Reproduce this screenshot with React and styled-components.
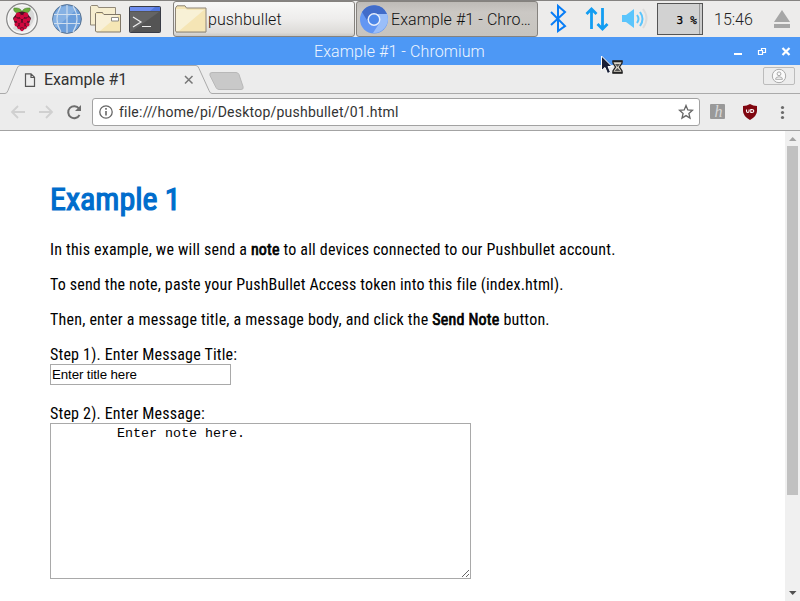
import React from 'react';
import styled, { createGlobalStyle } from 'styled-components';

const GlobalStyle = createGlobalStyle`
  * { box-sizing: border-box; }
  html, body { margin: 0; padding: 0; overflow: hidden; }
  svg { display: block; flex: none; }
`;

const Desktop = styled.div`
  position: relative;
  display: flex;
  flex-direction: column;
  width: 800px;
  height: 601px;
  overflow: hidden;
  background: #fff;
  font-family: Roboto, sans-serif;
`;

const Panel = styled.header`
  display: flex;
  align-items: flex-start;
  height: 37px;
  flex: none;
  background: #edeceb;
  border-top: 1px solid #858381;
`;

const Launchers = styled.nav`
  display: flex;
  width: 173px;
  flex: none;
  padding: 2px 0 0 5px;
  gap: 5px;
  > :first-child { margin-right: 6px; }
`;

const TaskButton = styled.div`
  display: flex;
  align-items: center;
  width: ${(p) => p.$width}px;
  height: 36px;
  flex: none;
  margin-right: 1px;
  padding-left: ${(p) => (p.$active ? 3 : 1)}px;
  border: 1px solid #85827e;
  border-radius: 3px;
  background: ${(p) => (p.$active ? 'linear-gradient(#bebbb7, #cbc8c4 30%, #c7c4bf)' : 'linear-gradient(#f8f8f7, #eeedec 50%, #dddbd8 90%, #c9c8c5)')};
  color: #111;
  font-weight: 300;
  font-size: 16px;
  white-space: nowrap;
`;

const TaskLabel = styled.span`
  margin-left: ${(p) => p.$gap}px;
  letter-spacing: 0.08px;
`;

const Tray = styled.div`
  display: flex;
  align-items: center;
  width: 262px;
  height: 36px;
`;

const CpuMeter = styled.div`
  width: 46px;
  height: 32px;
  flex: none;
  margin-left: 9px;
  padding-right: 5px;
  border: 1px solid #555;
  background: linear-gradient(90deg, transparent 41px, #999 41px, #999 42px, #ccc 42px) #d2d2d2;
  color: #000;
  font: 11px/34px "DejaVu Sans Mono", monospace;
  letter-spacing: 0.2px;
  text-align: right;
  white-space: pre;
  -webkit-text-stroke: 0.25px #000;
`;

const Clock = styled.time`
  width: 42px;
  margin: 1px 17px 0 11px;
  color: #222;
  font-weight: 300;
  font-size: 16px;
`;

const TitleBar = styled.div`
  display: flex;
  align-items: center;
  height: 28px;
  flex: none;
  background: #4d98f5;
  color: #eff6ff;
  font-weight: 300;
  font-size: 16px;
`;

const TitleText = styled.div`
  width: 175px;
  margin-left: 314px;
  letter-spacing: 0.09px;
  white-space: nowrap;
`;

const WindowControls = styled.div`
  margin-left: auto;
`;

const TabStrip = styled.div`
  height: 29px;
  flex: none;
  display: grid;
  background: #ececec;
  > * { grid-area: 1 / 1; }
`;

const TabContent = styled.div`
  display: flex;
  align-items: center;
  padding: 0 5px 0 24px;
  color: #333;
  font-size: 16px;
`;

const TabTitle = styled.span`
  width: 140px;
  margin-left: 8px;
  letter-spacing: -0.08px;
`;

const ProfileButton = styled.div`
  display: flex;
  align-self: flex-start;
  justify-content: center;
  width: 32px;
  height: 18px;
  margin: 2px 0 0 auto;
  border: 1px solid #bcbcbc;
  border-radius: 2px;
`;

const Toolbar = styled.div`
  display: flex;
  align-items: center;
  height: 37px;
  flex: none;
  padding-left: 10px;
  background: #ececec;
  border-bottom: 1px solid #a3a3a3;
`;

const AddressBar = styled.div`
  display: flex;
  align-items: center;
  width: 608px;
  height: 28px;
  margin-left: 9px;
  padding: 0 5px;
  border: 1px solid #a2a2a2;
  border-radius: 3px;
  background: #fff;
  color: #333;
  font-size: 14px;
`;

const Url = styled.span`
  flex: 1;
  margin-left: 5px;
  letter-spacing: 0.23px;
`;

const Viewport = styled.div`
  display: flex;
  flex: 1;
  min-height: 0;
`;

const Page = styled.main`
  flex: 1;
  padding: 48px 0 0 50px;
  color: #000;
  font-family: "Roboto Condensed", Roboto, sans-serif;
  font-stretch: condensed;
  font-size: 16px;
  line-height: 19px;
  letter-spacing: 0.19px;
`;

const Heading = styled.h1`
  margin: 0 0 21px;
  color: #006dcc;
  font-size: 32px;
  font-weight: 400;
  line-height: 40px;
  letter-spacing: 0;
  -webkit-text-stroke: 1.2px #006dcc;
`;

const Paragraph = styled.p`
  margin: 0 0 16px;
  letter-spacing: ${(p) => p.$spacing}px;
`;

const Strong = styled.strong`
  font-weight: 400;
  -webkit-text-stroke: 0.7px #000;
`;

const Field = styled.label`
  display: block;
  margin-bottom: 19px;
`;

const TitleInput = styled.input`
  display: block;
  width: 181px;
  height: 21px;
  padding: 1px;
  border: 1px solid #a9a9a9;
  border-radius: 0;
  outline: none;
  color: #000;
  font: 13.333px "Liberation Sans", sans-serif;
  letter-spacing: -0.12px;
`;

const NoteInput = styled.textarea`
  display: block;
  width: 421px;
  height: 156px;
  padding: 2px;
  border: 1px solid #a9a9a9;
  border-radius: 0;
  outline: none;
  overflow: hidden;
  color: #000;
  font: 13.333px/15px "Liberation Mono", monospace;
`;

const ScrollTrack = styled.div`
  display: flex;
  flex-direction: column;
  align-items: center;
  justify-content: space-between;
  width: 15px;
  background: #f0f0f0;
`;

const ScrollThumb = styled.div`
  width: 11px;
  height: 349px;
  margin-bottom: auto;
  background: #c1c1c1;
`;

const Pointer = styled.div`
  position: absolute;
  left: 600px;
  top: 54px;
`;

const Raspberry = () => (
  <svg width="34" height="34" viewBox="0 0 34 34">
    <circle cx="17" cy="16" r="15.3" fill="#eeedec" stroke="#858585" strokeWidth="1.2" />
    <path d="M27 5A15 15 0 0 1 7 26Z" fill="#d8d8d8" />
    <circle cx="17" cy="16" r="13.9" fill="none" stroke="#fafafa" />
    <path d="M17 10C9.5 11 8 7 9 5c3 0 7 0 8 4 1-4 5-4 8-4 1 2-1 6-8 5Z" fill="#6cad3c" stroke="#477c31" strokeWidth=".6" />
    <path d="M12 10q5-3 10 0 2 3 4 5-1 3-2 6-2 4-7 7-5-3-7-7l-2-6Z" fill="#4a1024" />
    <g fill="#d0073e">
      <circle cx="13.2" cy="12" r="2.5" /><circle cx="20.8" cy="12" r="2.5" />
      <circle cx="17" cy="14" r="2.2" /><circle cx="10.7" cy="16.2" r="2" /><circle cx="23.3" cy="16.2" r="2" />
      <circle cx="14" cy="18" r="2.4" /><circle cx="20" cy="18" r="2.4" />
      <circle cx="11.5" cy="21.4" r="2" /><circle cx="22.5" cy="21.4" r="2" />
      <circle cx="17" cy="22" r="2.5" /><circle cx="14" cy="24.6" r="1.7" /><circle cx="20" cy="24.6" r="1.7" /><circle cx="17" cy="26.6" r="1.6" />
    </g>
  </svg>
);

const Globe = () => (
  <svg width="34" height="34" viewBox="0 0 34 34">
    <circle cx="17" cy="16" r="14.4" fill="#6b9edb" stroke="#5c7592" />
    <path d="M6 25 27 6Q15-1 6 9 0 17 6 25Z" fill="#86b1e3" />
    <path d="M4 11.500h26M4 20.500h26M17 2v28M11 3q-8 13 0 26M23 3q8 13 0 26" fill="none" stroke="#d0dfef" strokeWidth="1.1" />
  </svg>
);

const FileManager = () => (
  <svg width="34" height="34" viewBox="0 0 34 34">
    <path d="M1.5 3.5 2.5 2.5h6l1 2h17v17.500h-25Z" fill="#f6edcf" stroke="#918878" />
    <path d="M6.500 10.500 7.500 9.500h6l1 2h17v17.500H7.500l-1-1Z" fill="#f5e6b5" stroke="#817869" />
    <path d="M7 11h7l1 1h15L11 28H7Z" fill="#f8f0d8" />
    <path d="M22.500 14.500h7v3.500h-7Z" fill="#fff" stroke="#8e8b86" />
  </svg>
);

const Terminal = () => (
  <svg width="34" height="34" viewBox="-1 0 34 34">
    <rect x=".5" y="3.500" width="31" height="26" rx="1" fill="#545454" stroke="#393c47" />
    <path d="M1 9h29L2 29H1Z" fill="#646464" />
    <path d="M1 4h30v4H1Z" fill="#5176df" /><path d="M1 4h25l-5 4H1Z" fill="#6e8df0" />
    <path d="m4 14 8 5-8 5M13 23.500h9" fill="none" stroke="#eee" strokeWidth="1.2" />
  </svg>
);

const Folder = () => (
  <svg width="32" height="28" viewBox="0 0 32 28">
    <path d="M.5 3 2 .8h8L11.500 3H31v24H1.500L.5 26Z" fill="#f5e5b5" stroke="#8e8576" />
    <path d="M1 4h10l1 1h17L4 26H1Z" fill="#f8f1d6" />
    <path d="M1 27.500h30" stroke="#aaa69b" />
  </svg>
);

const Chromium = () => (
  <svg width="28" height="29" viewBox="0 0 28 29">
    <circle cx="14" cy="14.500" r="14" fill="#6397f3" />
    <path d="M2 7A14 14 0 0 1 27 9H14a6 6 0 0 0-6 8Z" fill="#416cc9" />
    <path d="M27 9A14 14 0 0 1 13 28l7-11q1-5-6-8Z" fill="#9abef9" />
    <circle cx="14" cy="14.500" r="6.500" fill="#e9effb" /><circle cx="14" cy="14.500" r="5" fill="#4d87e8" />
  </svg>
);

const TrayIcons = () => (
  <svg width="109" height="36" viewBox="539 1 109 36">
    <path d="m551 12 14 14-7 5V6l7 6-14 13" fill="none" stroke="#087df6" strokeWidth="2" />
    <path d="M591.500 29V9m-5 5 5-5 5 5M602.500 8v20m-5-4 5 5 5-5" fill="none" stroke="#129df2" strokeWidth="2.800" />
    <path d="M622 15h4l8-6v19l-8-6h-4Z" fill="#5bc5fc" />
    <path d="M637 15q3 4 0 8" fill="none" stroke="#5bc5fc" strokeWidth="2" />
    <path d="M640 12q5 7 0 14" fill="none" stroke="#5bc5fc" strokeWidth="2" />
    <path d="M643 9q7 9 0 19" fill="none" stroke="#dcdcdc" strokeWidth="2" />
  </svg>
);

const Eject = () => (
  <svg width="18" height="20" viewBox="0 0 18 20"><path d="m9 1 8 12H1ZM1 15h16v4H1Z" fill="#a6a6a6" /></svg>
);

const WindowIcons = () => (
  <svg width="70" height="28" viewBox="730 37 70 28" fill="none" stroke="#fff">
    <path d="M734 54h8" strokeWidth="2" />
    <path d="M761.500 51v-2.500h4v4H763M758.500 50.500h4v4h-4Z" strokeWidth="1.200" />
    <path d="m782.500 48 7 7m0-7-7 7" strokeWidth="2.200" />
  </svg>
);

const TabShape = () => (
  <svg width="800" height="29" viewBox="0 65 800 29" fill="none">
    <path d="M0 93.500h5q2 0 3-3l9-22q1-3 3-3h176q2 0 3 3l10 22q1 3 3 3h588" fill="#eee" stroke="#aaa" />
    <path d="M212 72.500h24q2 0 3 2l4 12q1 3-2 3h-22q-2 0-3-2l-6-12q-1-3 2-3Z" fill="#c9c9c9" stroke="#b8b8b8" />
  </svg>
);

const DocumentIcon = () => (
  <svg width="12" height="14" viewBox="0 0 12 14" fill="none" stroke="#555" strokeWidth="1.200"><path d="M1.500.8H7l3.500 3.500v9h-9ZM7 1v3.500h3.500" /></svg>
);

const Close = () => (
  <svg width="10" height="10" viewBox="0 0 10 10" stroke="#777" strokeWidth="1.500"><path d="m1 1 7.500 7.500m0-7.500L1 8.500" /></svg>
);

const Person = () => (
  <svg width="16" height="16" viewBox="0 0 16 16" fill="none" stroke="#aaa">
    <circle cx="8" cy="8" r="6.700" fill="#fafafa" /><circle cx="8" cy="5.800" r="1.900" /><path d="M4.500 11.300q0-2.500 3.500-2.500t3.500 2.500Z" />
  </svg>
);

const NavIcons = () => (
  <svg width="73" height="20" viewBox="10 102 73 20" fill="none">
    <path d="M25 112H12m6-6-6 6 6 6M39 112h13m-6-6 6 6-6 6" stroke="#d0d0d0" strokeWidth="1.800" />
    <path d="M79 108.500a6 6 0 1 0 .5 6.500" stroke="#6e6e6e" strokeWidth="2" /><path d="M81 105v6h-6Z" fill="#6e6e6e" />
  </svg>
);

const Info = () => (
  <svg width="16" height="16" viewBox="0 0 16 16"><circle cx="8" cy="8" r="6.200" fill="none" stroke="#666" strokeWidth="1.300" /><path d="M8 7v4.500M8 4v1.700" stroke="#666" strokeWidth="1.600" /></svg>
);

const Star = () => (
  <svg width="16" height="16" viewBox="0 0 16 16"><path d="m8 1.500 1.800 4.400 4.700.4-3.600 3.100 1.100 4.700L8 11.600l-4 2.500 1.100-4.700-3.600-3.100 4.700-.4Z" fill="none" stroke="#666" strokeWidth="1.300" /></svg>
);

const Extensions = () => (
  <svg width="100" height="36" viewBox="700 94 100 36">
    <rect x="710" y="104" width="15" height="15" rx="1" fill="#999" />
    <text x="714.500" y="117" fill="#d8d8d8" fontFamily="Liberation Serif, serif" fontStyle="italic" fontSize="16">h</text>
    <path d="M743 106q4 0 7-2 3 2 7 2v5q0 5-7 9-7-4-7-9Z" fill="#800610" />
    <path d="M746.500 109.500v1.500q0 1.500 1.300 1.500t1.300-1.500v-1.500M750.800 109.500h1q2 0 2 1.500t-2 1.500h-1Z" fill="none" stroke="#fff" strokeWidth="1.100" />
    <g fill="#6b6b6b"><circle cx="782.500" cy="107.500" r="1.600" /><circle cx="782.500" cy="112.500" r="1.600" /><circle cx="782.500" cy="117.500" r="1.600" /></g>
  </svg>
);

const ScrollArrow = ({ down }) => (
  <svg width="15" height="15" viewBox="0 0 15 15"><path d={down ? 'M4 5h7.500L7.700 9Z' : 'M4 10h7.500L7.700 6Z'} fill={down ? '#505050' : '#a3a3a3'} /></svg>
);

const Cursor = () => (
  <svg width="24" height="22" viewBox="600 54 24 22">
    <path d="M601.500 56v14.500l3.500-3 2.500 6 3-1.300-2.500-5.700h4Z" fill="#192038" stroke="#fff" />
    <path d="M613 61h9v2l-2.500 4 2.500 4v2h-9v-2l2.500-4-2.500-4Z" fill="#d9d4c8" stroke="#222" strokeWidth="1.300" />
    <path d="M612.500 61.500h10M612.500 72.500h10" stroke="#222" strokeWidth="1.500" />
    <path d="M615 64h5l-2.500 3ZM614.500 71l3-3 3 3Z" fill="#555" />
  </svg>
);

export default function App() {
  return (
    <Desktop>
      <GlobalStyle />
      <Panel>
        <Launchers><Raspberry /><Globe /><FileManager /><Terminal /></Launchers>
        <TaskButton $width={182}><Folder /><TaskLabel $gap={1}>pushbullet</TaskLabel></TaskButton>
        <TaskButton $width={182} $active><Chromium /><TaskLabel $gap={3}>Example #1 - Chro…</TaskLabel></TaskButton>
        <Tray><TrayIcons /><CpuMeter>3 %</CpuMeter><Clock>15:46</Clock><Eject /></Tray>
      </Panel>
      <TitleBar>
        <TitleText>Example #1 - Chromium</TitleText>
        <WindowControls><WindowIcons /></WindowControls>
      </TitleBar>
      <TabStrip>
        <TabShape />
        <TabContent><DocumentIcon /><TabTitle>Example #1</TabTitle><Close /><ProfileButton><Person /></ProfileButton></TabContent>
      </TabStrip>
      <Toolbar>
        <NavIcons />
        <AddressBar><Info /><Url>file:///home/pi/Desktop/pushbullet/01.html</Url><Star /></AddressBar>
        <Extensions />
      </Toolbar>
      <Viewport>
        <Page>
          <Heading>Example 1</Heading>
          <Paragraph $spacing={0.19}>In this example, we will send a <Strong>note</Strong> to all devices connected to our Pushbullet account.</Paragraph>
          <Paragraph $spacing={0.165}>To send the note, paste your PushBullet Access token into this file (index.html).</Paragraph>
          <Paragraph $spacing={0.21}>Then, enter a message title, a message body, and click the <Strong>Send Note</Strong> button.</Paragraph>
          <Field>Step 1). Enter Message Title:<TitleInput defaultValue="Enter title here" /></Field>
          <Field>Step 2). Enter Message:<NoteInput defaultValue="        Enter note here." spellCheck={false} /></Field>
        </Page>
        <ScrollTrack><ScrollArrow /><ScrollThumb /><ScrollArrow down /></ScrollTrack>
      </Viewport>
      <Pointer><Cursor /></Pointer>
    </Desktop>
  );
}
